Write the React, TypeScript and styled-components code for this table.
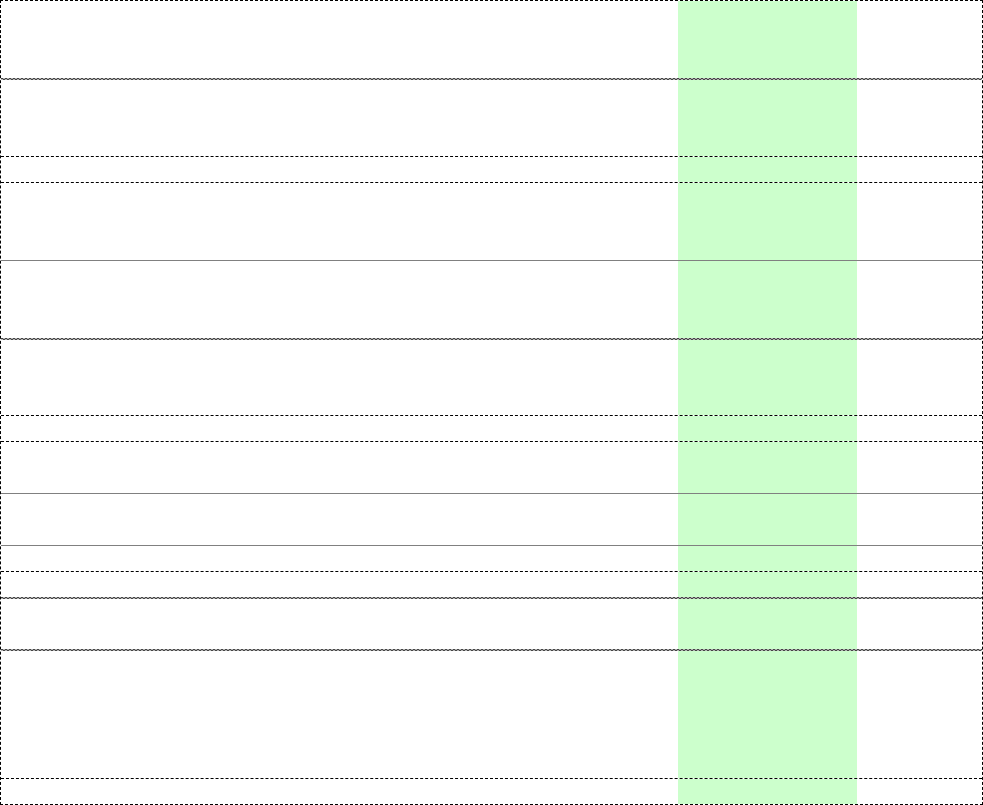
import React from "react";
import styled, { createGlobalStyle, css } from "styled-components";

const Global = createGlobalStyle`
  html, body { margin: 0; padding: 0; background: #fff; }
  body { font-family: "Liberation Sans", Arial, sans-serif; }
`;

const Frame = styled.div`
  box-sizing: border-box;
  width: 983px;
  height: 805px;
  border: 1px dashed #000;
  display: flex;
  flex-direction: column;
`;

type Edge = "none" | "dashed" | "solid";

const Row = styled.div<{ $h: number; $edge: Edge }>`
  box-sizing: border-box;
  height: ${(p) => p.$h}px;
  flex: none;
  display: grid;
  grid-template-columns: 677px 179px 1fr;
  ${(p) =>
    p.$edge === "dashed"
      ? css`border-top: 1px dashed #000;`
      : p.$edge === "solid"
      ? css`border-top: 1px solid #808080;`
      : ""}
`;

const Cell = styled.div<{ $green?: boolean }>`
  background: ${(p) => (p.$green ? "#ccffcc" : "transparent")};
`;

const DoubleRule = styled.div`
  flex: none;
  height: 2px;
  background:
    repeating-linear-gradient(90deg, #444 0 2px, #b0b0b0 2px 4px) 0 0 / 100% 1px no-repeat,
    repeating-linear-gradient(90deg, #b0b0b0 0 2px, #444 2px 4px) 0 1px / 100% 1px no-repeat;
`;

type Item = { kind: "row"; h: number; edge: Edge } | { kind: "double" };

const layout: Item[] = [
  { kind: "row", h: 77, edge: "none" },
  { kind: "double" },
  { kind: "row", h: 76, edge: "none" },
  { kind: "row", h: 26, edge: "dashed" },
  { kind: "row", h: 78, edge: "dashed" },
  { kind: "row", h: 78, edge: "solid" },
  { kind: "double" },
  { kind: "row", h: 75, edge: "none" },
  { kind: "row", h: 26, edge: "dashed" },
  { kind: "row", h: 52, edge: "dashed" },
  { kind: "row", h: 52, edge: "solid" },
  { kind: "row", h: 26, edge: "solid" },
  { kind: "row", h: 26, edge: "dashed" },
  { kind: "double" },
  { kind: "row", h: 50, edge: "none" },
  { kind: "double" },
  { kind: "row", h: 127, edge: "none" },
  { kind: "row", h: 26, edge: "dashed" },
];

export default function App() {
  return (
    <>
      <Global />
      <Frame>
        {layout.map((it, i) =>
          it.kind === "double" ? (
            <DoubleRule key={i} />
          ) : (
            <Row key={i} $h={it.h} $edge={it.edge}>
              <Cell />
              <Cell $green />
              <Cell />
            </Row>
          )
        )}
      </Frame>
    </>
  );
}
